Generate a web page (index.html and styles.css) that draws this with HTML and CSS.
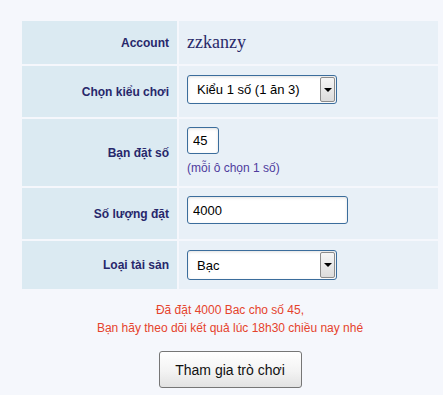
FILE: index.html
```html
<!DOCTYPE html>
<html lang="vi">
<head>
    <meta charset="UTF-8">
    <meta name="viewport" content="width=device-width, initial-scale=1.0">
    <title>Tham gia trò chơi</title>
    <link rel="stylesheet" href="styles.css">
</head>
<body>
    <!-- khung đặt cược -->
    <div class="wrap">
        <table class="bet-table">
            <tr class="row-account">
                <td class="label">Account</td>
                <td class="value value-mid"><span class="account-name">zzkanzy</span></td>
            </tr>
            <tr class="row-type">
                <td class="label">Chọn kiểu chơi</td>
                <td class="value">
                    <div class="select-box">
                        <select class="field select-field">
                            <option>Kiểu 1 số (1 ăn 3)</option>
                        </select>
                        <span class="select-arrow"></span>
                    </div>
                </td>
            </tr>
            <tr class="row-number">
                <td class="label">Bạn đặt số</td>
                <td class="value">
                    <input class="field input-number" type="text" value="45">
                    <div class="hint">(mỗi ô chọn 1 số)</div>
                </td>
            </tr>
            <tr class="row-amount">
                <td class="label">Số lượng đặt</td>
                <td class="value">
                    <input class="field input-amount" type="text" value="4000">
                </td>
            </tr>
            <tr class="row-asset">
                <td class="label">Loại tài sản</td>
                <td class="value">
                    <div class="select-box">
                        <select class="field select-field">
                            <option>Bạc</option>
                        </select>
                        <span class="select-arrow"></span>
                    </div>
                </td>
            </tr>
        </table>

        <!-- thông báo kết quả -->
        <div class="message">
            Đã đặt 4000 Bac cho số 45,<br>
            Bạn hãy theo dõi kết quả lúc 18h30 chiều nay nhé
        </div>

        <div class="actions">
            <button class="join-button">Tham gia trò chơi</button>
        </div>
    </div>
</body>
</html>
```

FILE: styles.css
```css
/* trang */
body {
    margin: 0;
    background-color: #f5f7fc;
    font-family: 'Liberation Sans', Arial, sans-serif;
}

.wrap {
    margin-left: 20px;
    padding-top: 19px;
    width: 420px;
}

/* bảng đặt cược */
.bet-table {
    width: 100%;
    border-collapse: separate;
    border-spacing: 2px;
}

.bet-table td {
    padding: 0;
}

.label {
    width: 147px;
    padding-right: 8px !important;
    text-align: right;
    vertical-align: middle;
    background-color: #dbeaf2;
    color: #27276b;
    font-size: 12px;
    font-weight: bold;
}

.value {
    vertical-align: top;
    padding: 9px 8px 0 8px !important;
    background-color: #e8f0f7;
}

.value-mid {
    vertical-align: middle;
    padding-top: 0 !important;
}

.row-account { height: 43px; }
.row-type { height: 51px; }
.row-number { height: 67px; }
.row-amount { height: 51px; }
.row-asset { height: 48px; }

.row-number .value,
.row-amount .value {
    padding-top: 8px !important;
}

.account-name {
    font-family: 'Liberation Serif', 'Times New Roman', serif;
    font-size: 18px;
    color: #2a2a6a;
}

/* ô nhập và hộp chọn */
.field {
    box-sizing: border-box;
    border: 1px solid #3b6d9c;
    border-radius: 3px;
    background-color: #fff;
    box-shadow: inset 0 1px 3px rgba(0, 0, 0, 0.12);
    font-family: 'Liberation Sans', Arial, sans-serif;
    font-size: 13px;
    color: #000;
    outline: none;
}

.select-box {
    position: relative;
    width: 150px;
    height: 29px;
}

.select-field {
    -webkit-appearance: none;
    appearance: none;
    width: 150px;
    height: 29px;
    padding: 0 0 0 9px;
    margin: 0;
}

.row-asset .select-box,
.row-asset .select-field {
    height: 30px;
}

.select-arrow {
    position: absolute;
    top: 2px;
    right: 2px;
    bottom: 2px;
    width: 13px;
    border: 1px solid #8c8c8c;
    border-radius: 2px;
    background: linear-gradient(#f6f6f6, #dcdcdc);
    pointer-events: none;
}

.select-arrow::after {
    content: "";
    position: absolute;
    left: 3px;
    top: 50%;
    margin-top: -2px;
    border-left: 4px solid transparent;
    border-right: 4px solid transparent;
    border-top: 4px solid #000;
}

.input-number {
    width: 32px;
    height: 27px;
    padding: 0 0 0 5px;
    margin: 0;
    display: block;
}

.input-amount {
    width: 161px;
    height: 28px;
    padding: 0 0 0 5px;
    margin: 0;
    display: block;
}

.hint {
    margin-top: 7px;
    font-size: 12px;
    line-height: 15px;
    color: #4f3b9e;
}

/* thông báo */
.message {
    margin-top: 10px;
    text-align: center;
    font-size: 12px;
    line-height: 18px;
    color: #e5432c;
}

.actions {
    margin-top: 14px;
    text-align: center;
}

.join-button {
    width: 143px;
    height: 37px;
    margin-left: 0;
    border: 1px solid #767676;
    border-radius: 3px;
    background: linear-gradient(#ffffff, #f3f3f3 55%, #e2e2e2);
    font-family: 'Liberation Sans', Arial, sans-serif;
    font-size: 14px;
    color: #111;
    cursor: pointer;
}
```
